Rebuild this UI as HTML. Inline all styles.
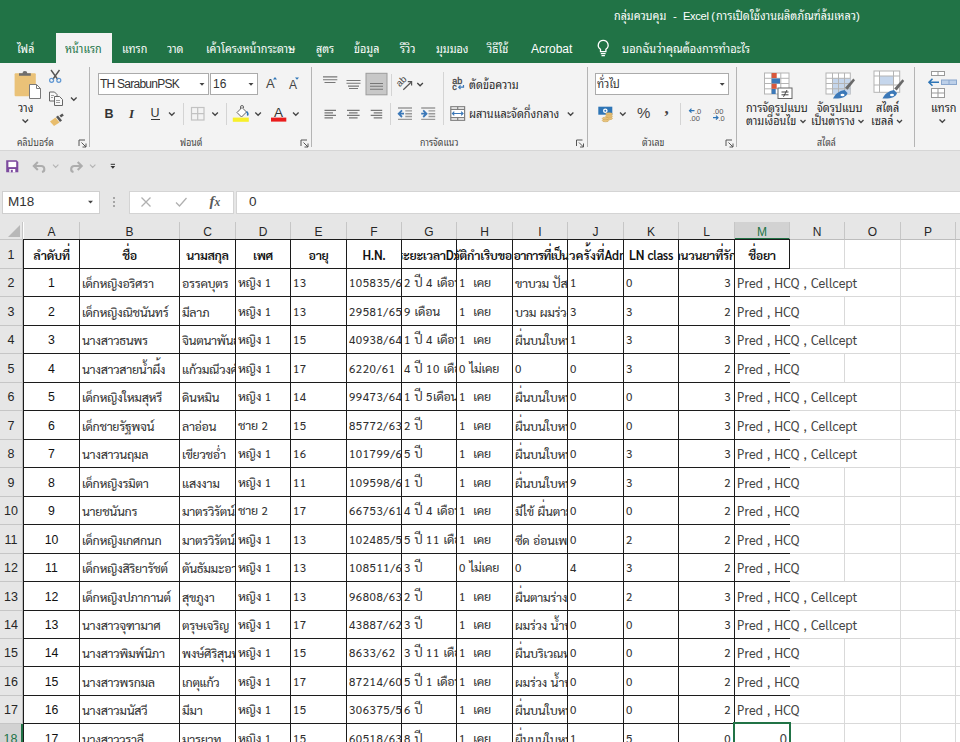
<!DOCTYPE html>
<html lang="th"><head><meta charset="utf-8"><title>Excel</title>
<style>
html,body{margin:0;padding:0}
body{width:960px;height:742px;overflow:hidden;position:relative;background:#e6e6e6;font-family:"Liberation Sans","Noto Sans Thai Looped","Loma",sans-serif;font-size:12px;color:#262626}
.abs,#top div,#top span,#top svg{position:absolute}
#top{position:absolute;left:0;top:0;width:960px;height:222px;overflow:hidden}
.t{white-space:nowrap;line-height:16px;height:16px}
.th{transform:scaleX(.85);transform-origin:0 50%}
#titlebar{left:0;top:0;width:960px;height:63px;background:#217346}
#ribbon{left:0;top:63px;width:960px;height:87px;background:#f3f3f3;border-bottom:1px solid #d6d6d6}
.tab{color:#fff;font-size:12.7px;top:40.5px}
.sep{width:1px;background:#b4b4b4;top:67px;height:80px}
.ssep{width:1px;background:#d4d4d4;height:22px}
.box{background:#fff;border:1px solid #ababab;box-sizing:border-box;height:22px;top:73px}
.glabel{font-size:10.3px;color:#444;top:135px}
.lbl{font-size:12.8px;color:#262626}
/* grid */
#grid{position:absolute;left:0;top:0;width:960px;height:742px;overflow:hidden}
#grid>div{position:absolute;box-sizing:border-box}
#gridbg{position:absolute;left:0;top:222px;width:960px;height:520px;background:#fff}
.corner{left:0;top:222px;width:23px;height:18px;background:#e6e6e6;border-right:1px solid #c6c6c6;border-bottom:1px solid #c6c6c6}
.corner:after{content:"";position:absolute;right:2px;bottom:2px;border-style:solid;border-width:0 0 12px 12px;border-color:transparent transparent #b8b8b8 transparent}
.ch{top:222px;height:18px;background:#e6e6e6;border-right:1px solid #c6c6c6;border-bottom:1px solid #bdbdbd;text-align:center;font-size:12px;line-height:21px;color:#262626}
.ch.sel{background:#d2d2d2;color:#217346;border-bottom:2px solid #217346}
.rh{left:0;width:23px;background:#e6e6e6;border-right:1px solid #bdbdbd;border-bottom:1px solid #c6c6c6;text-align:center;font-size:12.5px;color:#262626}
.rh.sel{background:#d2d2d2;color:#217346;border-right:2px solid #217346}
.gv{width:1px;background:#d9d9d9}
.gh{width:175px;height:1px;background:#d9d9d9}
.c{font-family:"Sarabun","Liberation Sans","Loma",sans-serif;font-size:12.5px;color:#303030;overflow:hidden;white-space:pre;letter-spacing:-0.35px;word-spacing:1px}
.c span{position:absolute;left:2px;bottom:5px;line-height:16px}
.c i{position:absolute;right:100%;font-style:normal}
.c var{font-style:normal;font-size:11.5px;letter-spacing:.55px}
.c.b{border:1px solid #1c1c1c;background:#fff}
.c.h{font-weight:600;color:#111}
.c.h span,.c.ctr span{left:50%;transform:translateX(-50%)}
.c.clip span{transform:none}
.c.ctr{font-family:"Liberation Sans","Sarabun",sans-serif;font-size:12.3px;letter-spacing:0;color:#111}
.c.rt span{left:auto;right:3px}
.c.m{overflow:visible;border:1px solid #1c1c1c;border-right:0;background:#fff;color:#444;font-size:13px;letter-spacing:0;word-spacing:1px}
.c.m span{left:2px}
.c.m.rt span{left:auto;right:3px}
.selbox{border:2px solid #217346}
</style></head><body>
<div id="gridbg"></div>
<div id="grid">
<div class="corner"></div>
<div class="ch" style="left:24px;width:56px">A</div>
<div class="ch" style="left:80px;width:100px">B</div>
<div class="ch" style="left:180px;width:56px">C</div>
<div class="ch" style="left:236px;width:55px">D</div>
<div class="ch" style="left:291px;width:56px">E</div>
<div class="ch" style="left:347px;width:55px">F</div>
<div class="ch" style="left:402px;width:55px">G</div>
<div class="ch" style="left:457px;width:56px">H</div>
<div class="ch" style="left:513px;width:55px">I</div>
<div class="ch" style="left:568px;width:56px">J</div>
<div class="ch" style="left:624px;width:55px">K</div>
<div class="ch" style="left:679px;width:56px">L</div>
<div class="ch sel" style="left:735px;width:55px">M</div>
<div class="ch" style="left:790px;width:55px">N</div>
<div class="ch" style="left:845px;width:56px">O</div>
<div class="ch" style="left:901px;width:55px">P</div>
<div class="ch" style="left:956px;width:56px">Q</div>
<div class="rh" style="top:240px;height:29px;line-height:30px">1</div>
<div class="rh" style="top:269px;height:28px;line-height:29px">2</div>
<div class="rh" style="top:297px;height:29px;line-height:30px">3</div>
<div class="rh" style="top:326px;height:28px;line-height:29px">4</div>
<div class="rh" style="top:354px;height:29px;line-height:30px">5</div>
<div class="rh" style="top:383px;height:28px;line-height:29px">6</div>
<div class="rh" style="top:411px;height:29px;line-height:30px">7</div>
<div class="rh" style="top:440px;height:28px;line-height:29px">8</div>
<div class="rh" style="top:468px;height:29px;line-height:30px">9</div>
<div class="rh" style="top:497px;height:28px;line-height:29px">10</div>
<div class="rh" style="top:525px;height:29px;line-height:30px">11</div>
<div class="rh" style="top:554px;height:28px;line-height:29px">12</div>
<div class="rh" style="top:582px;height:29px;line-height:30px">13</div>
<div class="rh" style="top:611px;height:28px;line-height:29px">14</div>
<div class="rh" style="top:639px;height:28px;line-height:29px">15</div>
<div class="rh" style="top:667px;height:29px;line-height:30px">16</div>
<div class="rh" style="top:696px;height:28px;line-height:29px">17</div>
<div class="rh sel" style="top:724px;height:29px;line-height:30px">18</div>
<div class="gv" style="left:844px;top:240px;height:29px"></div>
<div class="gv" style="left:844px;top:297px;height:29px"></div>
<div class="gv" style="left:844px;top:354px;height:29px"></div>
<div class="gv" style="left:844px;top:468px;height:29px"></div>
<div class="gv" style="left:844px;top:497px;height:28px"></div>
<div class="gv" style="left:844px;top:525px;height:29px"></div>
<div class="gv" style="left:844px;top:554px;height:28px"></div>
<div class="gv" style="left:844px;top:639px;height:28px"></div>
<div class="gv" style="left:844px;top:667px;height:29px"></div>
<div class="gv" style="left:844px;top:696px;height:28px"></div>
<div class="gv" style="left:844px;top:724px;height:18px"></div>
<div class="gv" style="left:789px;top:753px;height:-11px"></div>
<div class="gv" style="left:900px;top:240px;height:502px"></div>
<div class="gv" style="left:955px;top:240px;height:502px"></div>
<div class="gh" style="top:268px;left:790px"></div>
<div class="gh" style="top:296px;left:790px"></div>
<div class="gh" style="top:325px;left:790px"></div>
<div class="gh" style="top:353px;left:790px"></div>
<div class="gh" style="top:382px;left:790px"></div>
<div class="gh" style="top:410px;left:790px"></div>
<div class="gh" style="top:439px;left:790px"></div>
<div class="gh" style="top:467px;left:790px"></div>
<div class="gh" style="top:496px;left:790px"></div>
<div class="gh" style="top:524px;left:790px"></div>
<div class="gh" style="top:553px;left:790px"></div>
<div class="gh" style="top:581px;left:790px"></div>
<div class="gh" style="top:610px;left:790px"></div>
<div class="gh" style="top:638px;left:790px"></div>
<div class="gh" style="top:666px;left:790px"></div>
<div class="gh" style="top:695px;left:790px"></div>
<div class="gh" style="top:723px;left:790px"></div>
<div class="gh" style="top:752px;left:790px"></div>
<div class="c h b" style="left:23px;top:239px;width:57px;height:30px"><span>ลำดับที่</span></div>
<div class="c h b" style="left:79px;top:239px;width:101px;height:30px"><span>ชื่อ</span></div>
<div class="c h b" style="left:179px;top:239px;width:57px;height:30px"><span>นามสกุล</span></div>
<div class="c h b" style="left:235px;top:239px;width:56px;height:30px"><span>เพศ</span></div>
<div class="c h b" style="left:290px;top:239px;width:57px;height:30px"><span>อายุ</span></div>
<div class="c h b" style="left:346px;top:239px;width:56px;height:30px"><span>H.N.</span></div>
<div class="c h b clip" style="left:401px;top:239px;width:56px;height:30px"><span style="left:1px"><i>ร</i>ะยะเวลาDx SLE</span></div>
<div class="c h b clip" style="left:456px;top:239px;width:57px;height:30px"><span style="left:2.5px"><i>ประวั</i>ติกำเริบของโรค</span></div>
<div class="c h b clip" style="left:512px;top:239px;width:56px;height:30px"><span style="left:0.5px;letter-spacing:-0.8px">อาการที่เป็น</span></div>
<div class="c h b clip" style="left:567px;top:239px;width:57px;height:30px"><span style="left:1px;letter-spacing:.15px"><i>จำน</i>วครั้งที่Admit</span></div>
<div class="c h b" style="left:623px;top:239px;width:56px;height:30px"><span>LN class</span></div>
<div class="c h b clip" style="left:678px;top:239px;width:57px;height:30px"><span style="left:1.5px"><i>จำ</i>นวนยาที่รักษา</span></div>
<div class="c h b" style="left:734px;top:239px;width:56px;height:30px"><span>ชื่อยา</span></div>
<div class="c ctr b" style="left:23px;top:268px;width:57px;height:29px"><span>1</span></div>
<div class="c b" style="left:79px;top:268px;width:101px;height:29px"><span>เด็กหญิงอริศรา</span></div>
<div class="c b" style="left:179px;top:268px;width:57px;height:29px"><span>อรรคบุตร</span></div>
<div class="c b" style="left:235px;top:268px;width:56px;height:29px"><span>หญิง <var>1</var></span></div>
<div class="c b" style="left:290px;top:268px;width:57px;height:29px"><span><var>13</var></span></div>
<div class="c b" style="left:346px;top:268px;width:56px;height:29px"><span><var>105835/6</var></span></div>
<div class="c b" style="left:401px;top:268px;width:56px;height:29px"><span><var>2</var> ปี <var>4</var> เดือน</span></div>
<div class="c b" style="left:456px;top:268px;width:57px;height:29px"><span><var>1</var>  เคย</span></div>
<div class="c b" style="left:512px;top:268px;width:56px;height:29px"><span>ขาบวม ปัสส</span></div>
<div class="c b" style="left:567px;top:268px;width:57px;height:29px"><span><var>1</var></span></div>
<div class="c b" style="left:623px;top:268px;width:56px;height:29px"><span><var>0</var></span></div>
<div class="c rt b" style="left:678px;top:268px;width:57px;height:29px"><span><var>3</var></span></div>
<div class="c m" style="left:734px;top:268px;width:56px;height:29px"><span>Pred , HCQ , Cellcept</span></div>
<div class="c ctr b" style="left:23px;top:296px;width:57px;height:30px"><span>2</span></div>
<div class="c b" style="left:79px;top:296px;width:101px;height:30px"><span>เด็กหญิงณิชนันทร์</span></div>
<div class="c b" style="left:179px;top:296px;width:57px;height:30px"><span>มีลาภ</span></div>
<div class="c b" style="left:235px;top:296px;width:56px;height:30px"><span>หญิง <var>1</var></span></div>
<div class="c b" style="left:290px;top:296px;width:57px;height:30px"><span><var>13</var></span></div>
<div class="c b" style="left:346px;top:296px;width:56px;height:30px"><span><var>29581/65</var></span></div>
<div class="c b" style="left:401px;top:296px;width:56px;height:30px"><span><var>9</var> เดือน</span></div>
<div class="c b" style="left:456px;top:296px;width:57px;height:30px"><span><var>1</var>  เคย</span></div>
<div class="c b" style="left:512px;top:296px;width:56px;height:30px"><span>บวม ผมร่วง</span></div>
<div class="c b" style="left:567px;top:296px;width:57px;height:30px"><span><var>3</var></span></div>
<div class="c b" style="left:623px;top:296px;width:56px;height:30px"><span><var>3</var></span></div>
<div class="c rt b" style="left:678px;top:296px;width:57px;height:30px"><span><var>2</var></span></div>
<div class="c m" style="left:734px;top:296px;width:56px;height:30px"><span>Pred , HCQ</span></div>
<div class="c ctr b" style="left:23px;top:325px;width:57px;height:29px"><span>3</span></div>
<div class="c b" style="left:79px;top:325px;width:101px;height:29px"><span>นางสาวธนพร</span></div>
<div class="c b" style="left:179px;top:325px;width:57px;height:29px"><span>จินตนาพันธ์</span></div>
<div class="c b" style="left:235px;top:325px;width:56px;height:29px"><span>หญิง <var>1</var></span></div>
<div class="c b" style="left:290px;top:325px;width:57px;height:29px"><span><var>15</var></span></div>
<div class="c b" style="left:346px;top:325px;width:56px;height:29px"><span><var>40938/64</var></span></div>
<div class="c b" style="left:401px;top:325px;width:56px;height:29px"><span><var>1</var> ปี <var>4</var> เดือน</span></div>
<div class="c b" style="left:456px;top:325px;width:57px;height:29px"><span><var>1</var>  เคย</span></div>
<div class="c b" style="left:512px;top:325px;width:56px;height:29px"><span>ผื่นบนใบหน้า</span></div>
<div class="c b" style="left:567px;top:325px;width:57px;height:29px"><span><var>1</var></span></div>
<div class="c b" style="left:623px;top:325px;width:56px;height:29px"><span><var>3</var></span></div>
<div class="c rt b" style="left:678px;top:325px;width:57px;height:29px"><span><var>3</var></span></div>
<div class="c m" style="left:734px;top:325px;width:56px;height:29px"><span>Pred , HCQ , Cellcept</span></div>
<div class="c ctr b" style="left:23px;top:353px;width:57px;height:30px"><span>4</span></div>
<div class="c b" style="left:79px;top:353px;width:101px;height:30px"><span>นางสาวสายน้ำผึ้ง</span></div>
<div class="c b" style="left:179px;top:353px;width:57px;height:30px"><span>แก้วมณีวงศ์</span></div>
<div class="c b" style="left:235px;top:353px;width:56px;height:30px"><span>หญิง <var>1</var></span></div>
<div class="c b" style="left:290px;top:353px;width:57px;height:30px"><span><var>17</var></span></div>
<div class="c b" style="left:346px;top:353px;width:56px;height:30px"><span><var>6220/61</var></span></div>
<div class="c b" style="left:401px;top:353px;width:56px;height:30px"><span><var>4</var> ปี <var>10</var> เดือน</span></div>
<div class="c b" style="left:456px;top:353px;width:57px;height:30px"><span><var>0</var> ไม่เคย</span></div>
<div class="c b" style="left:512px;top:353px;width:56px;height:30px"><span><var>0</var></span></div>
<div class="c b" style="left:567px;top:353px;width:57px;height:30px"><span><var>0</var></span></div>
<div class="c b" style="left:623px;top:353px;width:56px;height:30px"><span><var>3</var></span></div>
<div class="c rt b" style="left:678px;top:353px;width:57px;height:30px"><span><var>2</var></span></div>
<div class="c m" style="left:734px;top:353px;width:56px;height:30px"><span>Pred , HCQ</span></div>
<div class="c ctr b" style="left:23px;top:382px;width:57px;height:29px"><span>5</span></div>
<div class="c b" style="left:79px;top:382px;width:101px;height:29px"><span>เด็กหญิงใหมสุหรี</span></div>
<div class="c b" style="left:179px;top:382px;width:57px;height:29px"><span>ดินหมิน</span></div>
<div class="c b" style="left:235px;top:382px;width:56px;height:29px"><span>หญิง <var>1</var></span></div>
<div class="c b" style="left:290px;top:382px;width:57px;height:29px"><span><var>14</var></span></div>
<div class="c b" style="left:346px;top:382px;width:56px;height:29px"><span><var>99473/64</var></span></div>
<div class="c b" style="left:401px;top:382px;width:56px;height:29px"><span><var>1</var> ปี <var>5</var>เดือน</span></div>
<div class="c b" style="left:456px;top:382px;width:57px;height:29px"><span><var>1</var>  เคย</span></div>
<div class="c b" style="left:512px;top:382px;width:56px;height:29px"><span>ผื่นบนใบหน้า</span></div>
<div class="c b" style="left:567px;top:382px;width:57px;height:29px"><span><var>0</var></span></div>
<div class="c b" style="left:623px;top:382px;width:56px;height:29px"><span><var>0</var></span></div>
<div class="c rt b" style="left:678px;top:382px;width:57px;height:29px"><span><var>3</var></span></div>
<div class="c m" style="left:734px;top:382px;width:56px;height:29px"><span>Pred , HCQ , Cellcept</span></div>
<div class="c ctr b" style="left:23px;top:410px;width:57px;height:30px"><span>6</span></div>
<div class="c b" style="left:79px;top:410px;width:101px;height:30px"><span>เด็กชายรัฐพจน์</span></div>
<div class="c b" style="left:179px;top:410px;width:57px;height:30px"><span>ลาอ่อน</span></div>
<div class="c b" style="left:235px;top:410px;width:56px;height:30px"><span>ชาย <var>2</var></span></div>
<div class="c b" style="left:290px;top:410px;width:57px;height:30px"><span><var>15</var></span></div>
<div class="c b" style="left:346px;top:410px;width:56px;height:30px"><span><var>85772/63</var></span></div>
<div class="c b" style="left:401px;top:410px;width:56px;height:30px"><span><var>2</var> ปี</span></div>
<div class="c b" style="left:456px;top:410px;width:57px;height:30px"><span><var>1</var>  เคย</span></div>
<div class="c b" style="left:512px;top:410px;width:56px;height:30px"><span>ผื่นบนใบหน้า</span></div>
<div class="c b" style="left:567px;top:410px;width:57px;height:30px"><span><var>0</var></span></div>
<div class="c b" style="left:623px;top:410px;width:56px;height:30px"><span><var>0</var></span></div>
<div class="c rt b" style="left:678px;top:410px;width:57px;height:30px"><span><var>3</var></span></div>
<div class="c m" style="left:734px;top:410px;width:56px;height:30px"><span>Pred , HCQ , Cellcept</span></div>
<div class="c ctr b" style="left:23px;top:439px;width:57px;height:29px"><span>7</span></div>
<div class="c b" style="left:79px;top:439px;width:101px;height:29px"><span>นางสาวนฤมล</span></div>
<div class="c b" style="left:179px;top:439px;width:57px;height:29px"><span>เขียวชอ่ำ</span></div>
<div class="c b" style="left:235px;top:439px;width:56px;height:29px"><span>หญิง <var>1</var></span></div>
<div class="c b" style="left:290px;top:439px;width:57px;height:29px"><span><var>16</var></span></div>
<div class="c b" style="left:346px;top:439px;width:56px;height:29px"><span><var>101799/6</var></span></div>
<div class="c b" style="left:401px;top:439px;width:56px;height:29px"><span><var>5</var> ปี</span></div>
<div class="c b" style="left:456px;top:439px;width:57px;height:29px"><span><var>1</var>  เคย</span></div>
<div class="c b" style="left:512px;top:439px;width:56px;height:29px"><span>ผื่นบนใบหน้า</span></div>
<div class="c b" style="left:567px;top:439px;width:57px;height:29px"><span><var>0</var></span></div>
<div class="c b" style="left:623px;top:439px;width:56px;height:29px"><span><var>3</var></span></div>
<div class="c rt b" style="left:678px;top:439px;width:57px;height:29px"><span><var>3</var></span></div>
<div class="c m" style="left:734px;top:439px;width:56px;height:29px"><span>Pred , HCQ , Cellcept</span></div>
<div class="c ctr b" style="left:23px;top:467px;width:57px;height:30px"><span>8</span></div>
<div class="c b" style="left:79px;top:467px;width:101px;height:30px"><span>เด็กหญิงรมิตา</span></div>
<div class="c b" style="left:179px;top:467px;width:57px;height:30px"><span>แสงงาม</span></div>
<div class="c b" style="left:235px;top:467px;width:56px;height:30px"><span>หญิง <var>1</var></span></div>
<div class="c b" style="left:290px;top:467px;width:57px;height:30px"><span><var>11</var></span></div>
<div class="c b" style="left:346px;top:467px;width:56px;height:30px"><span><var>109598/6</var></span></div>
<div class="c b" style="left:401px;top:467px;width:56px;height:30px"><span><var>1</var> ปี</span></div>
<div class="c b" style="left:456px;top:467px;width:57px;height:30px"><span><var>1</var>  เคย</span></div>
<div class="c b" style="left:512px;top:467px;width:56px;height:30px"><span>ผื่นบนใบหน้า</span></div>
<div class="c b" style="left:567px;top:467px;width:57px;height:30px"><span><var>9</var></span></div>
<div class="c b" style="left:623px;top:467px;width:56px;height:30px"><span><var>3</var></span></div>
<div class="c rt b" style="left:678px;top:467px;width:57px;height:30px"><span><var>2</var></span></div>
<div class="c m" style="left:734px;top:467px;width:56px;height:30px"><span>Pred , HCQ</span></div>
<div class="c ctr b" style="left:23px;top:496px;width:57px;height:29px"><span>9</span></div>
<div class="c b" style="left:79px;top:496px;width:101px;height:29px"><span>นายชนันกร</span></div>
<div class="c b" style="left:179px;top:496px;width:57px;height:29px"><span>มาตรวิรัตน์</span></div>
<div class="c b" style="left:235px;top:496px;width:56px;height:29px"><span>ชาย <var>2</var></span></div>
<div class="c b" style="left:290px;top:496px;width:57px;height:29px"><span><var>17</var></span></div>
<div class="c b" style="left:346px;top:496px;width:56px;height:29px"><span><var>66753/61</var></span></div>
<div class="c b" style="left:401px;top:496px;width:56px;height:29px"><span><var>4</var> ปี <var>4</var> เดือน</span></div>
<div class="c b" style="left:456px;top:496px;width:57px;height:29px"><span><var>1</var>  เคย</span></div>
<div class="c b" style="left:512px;top:496px;width:56px;height:29px"><span>มีไข้ ผื่นตาม</span></div>
<div class="c b" style="left:567px;top:496px;width:57px;height:29px"><span><var>0</var></span></div>
<div class="c b" style="left:623px;top:496px;width:56px;height:29px"><span><var>0</var></span></div>
<div class="c rt b" style="left:678px;top:496px;width:57px;height:29px"><span><var>2</var></span></div>
<div class="c m" style="left:734px;top:496px;width:56px;height:29px"><span>Pred , HCQ</span></div>
<div class="c ctr b" style="left:23px;top:524px;width:57px;height:30px"><span>10</span></div>
<div class="c b" style="left:79px;top:524px;width:101px;height:30px"><span>เด็กหญิงเกศกนก</span></div>
<div class="c b" style="left:179px;top:524px;width:57px;height:30px"><span>มาตรวิรัตน์</span></div>
<div class="c b" style="left:235px;top:524px;width:56px;height:30px"><span>หญิง <var>1</var></span></div>
<div class="c b" style="left:290px;top:524px;width:57px;height:30px"><span><var>13</var></span></div>
<div class="c b" style="left:346px;top:524px;width:56px;height:30px"><span><var>102485/5</var></span></div>
<div class="c b" style="left:401px;top:524px;width:56px;height:30px"><span><var>5</var> ปี <var>11</var> เดือน</span></div>
<div class="c b" style="left:456px;top:524px;width:57px;height:30px"><span><var>1</var>  เคย</span></div>
<div class="c b" style="left:512px;top:524px;width:56px;height:30px"><span>ซีด อ่อนเพลีย</span></div>
<div class="c b" style="left:567px;top:524px;width:57px;height:30px"><span><var>0</var></span></div>
<div class="c b" style="left:623px;top:524px;width:56px;height:30px"><span><var>2</var></span></div>
<div class="c rt b" style="left:678px;top:524px;width:57px;height:30px"><span><var>2</var></span></div>
<div class="c m" style="left:734px;top:524px;width:56px;height:30px"><span>Pred , HCQ</span></div>
<div class="c ctr b" style="left:23px;top:553px;width:57px;height:29px"><span>11</span></div>
<div class="c b" style="left:79px;top:553px;width:101px;height:29px"><span>เด็กหญิงสิริยารัชต์</span></div>
<div class="c b" style="left:179px;top:553px;width:57px;height:29px"><span>ตันธัมมะอาจ</span></div>
<div class="c b" style="left:235px;top:553px;width:56px;height:29px"><span>หญิง <var>1</var></span></div>
<div class="c b" style="left:290px;top:553px;width:57px;height:29px"><span><var>13</var></span></div>
<div class="c b" style="left:346px;top:553px;width:56px;height:29px"><span><var>108511/6</var></span></div>
<div class="c b" style="left:401px;top:553px;width:56px;height:29px"><span><var>3</var> ปี</span></div>
<div class="c b" style="left:456px;top:553px;width:57px;height:29px"><span><var>0</var> ไม่เคย</span></div>
<div class="c b" style="left:512px;top:553px;width:56px;height:29px"><span><var>0</var></span></div>
<div class="c b" style="left:567px;top:553px;width:57px;height:29px"><span><var>4</var></span></div>
<div class="c b" style="left:623px;top:553px;width:56px;height:29px"><span><var>3</var></span></div>
<div class="c rt b" style="left:678px;top:553px;width:57px;height:29px"><span><var>2</var></span></div>
<div class="c m" style="left:734px;top:553px;width:56px;height:29px"><span>Pred , HCQ</span></div>
<div class="c ctr b" style="left:23px;top:581px;width:57px;height:30px"><span>12</span></div>
<div class="c b" style="left:79px;top:581px;width:101px;height:30px"><span>เด็กหญิงปภากานต์</span></div>
<div class="c b" style="left:179px;top:581px;width:57px;height:30px"><span>สุขภูงา</span></div>
<div class="c b" style="left:235px;top:581px;width:56px;height:30px"><span>หญิง <var>1</var></span></div>
<div class="c b" style="left:290px;top:581px;width:57px;height:30px"><span><var>13</var></span></div>
<div class="c b" style="left:346px;top:581px;width:56px;height:30px"><span><var>96808/63</var></span></div>
<div class="c b" style="left:401px;top:581px;width:56px;height:30px"><span><var>2</var> ปี</span></div>
<div class="c b" style="left:456px;top:581px;width:57px;height:30px"><span><var>1</var>  เคย</span></div>
<div class="c b" style="left:512px;top:581px;width:56px;height:30px"><span>ผื่นตามร่างกาย</span></div>
<div class="c b" style="left:567px;top:581px;width:57px;height:30px"><span><var>0</var></span></div>
<div class="c b" style="left:623px;top:581px;width:56px;height:30px"><span><var>2</var></span></div>
<div class="c rt b" style="left:678px;top:581px;width:57px;height:30px"><span><var>3</var></span></div>
<div class="c m" style="left:734px;top:581px;width:56px;height:30px"><span>Pred , HCQ , Cellcept</span></div>
<div class="c ctr b" style="left:23px;top:610px;width:57px;height:29px"><span>13</span></div>
<div class="c b" style="left:79px;top:610px;width:101px;height:29px"><span>นางสาวจุฑามาศ</span></div>
<div class="c b" style="left:179px;top:610px;width:57px;height:29px"><span>ตรุษเจริญ</span></div>
<div class="c b" style="left:235px;top:610px;width:56px;height:29px"><span>หญิง <var>1</var></span></div>
<div class="c b" style="left:290px;top:610px;width:57px;height:29px"><span><var>17</var></span></div>
<div class="c b" style="left:346px;top:610px;width:56px;height:29px"><span><var>43887/62</var></span></div>
<div class="c b" style="left:401px;top:610px;width:56px;height:29px"><span><var>3</var> ปี</span></div>
<div class="c b" style="left:456px;top:610px;width:57px;height:29px"><span><var>1</var>  เคย</span></div>
<div class="c b" style="left:512px;top:610px;width:56px;height:29px"><span>ผมร่วง น้ำหนัก</span></div>
<div class="c b" style="left:567px;top:610px;width:57px;height:29px"><span><var>0</var></span></div>
<div class="c b" style="left:623px;top:610px;width:56px;height:29px"><span><var>0</var></span></div>
<div class="c rt b" style="left:678px;top:610px;width:57px;height:29px"><span><var>3</var></span></div>
<div class="c m" style="left:734px;top:610px;width:56px;height:29px"><span>Pred , HCQ , Cellcept</span></div>
<div class="c ctr b" style="left:23px;top:638px;width:57px;height:29px"><span>14</span></div>
<div class="c b" style="left:79px;top:638px;width:101px;height:29px"><span>นางสาวพิมพ์นิภา</span></div>
<div class="c b" style="left:179px;top:638px;width:57px;height:29px"><span>พงษ์ศิริสุนทร</span></div>
<div class="c b" style="left:235px;top:638px;width:56px;height:29px"><span>หญิง <var>1</var></span></div>
<div class="c b" style="left:290px;top:638px;width:57px;height:29px"><span><var>15</var></span></div>
<div class="c b" style="left:346px;top:638px;width:56px;height:29px"><span><var>8633/62</var></span></div>
<div class="c b" style="left:401px;top:638px;width:56px;height:29px"><span><var>3</var> ปี <var>11</var> เดือน</span></div>
<div class="c b" style="left:456px;top:638px;width:57px;height:29px"><span><var>1</var>  เคย</span></div>
<div class="c b" style="left:512px;top:638px;width:56px;height:29px"><span>ผื่นบริเวณหน้า</span></div>
<div class="c b" style="left:567px;top:638px;width:57px;height:29px"><span><var>0</var></span></div>
<div class="c b" style="left:623px;top:638px;width:56px;height:29px"><span><var>0</var></span></div>
<div class="c rt b" style="left:678px;top:638px;width:57px;height:29px"><span><var>2</var></span></div>
<div class="c m" style="left:734px;top:638px;width:56px;height:29px"><span>Pred , HCQ</span></div>
<div class="c ctr b" style="left:23px;top:666px;width:57px;height:30px"><span>15</span></div>
<div class="c b" style="left:79px;top:666px;width:101px;height:30px"><span>นางสาวพรกมล</span></div>
<div class="c b" style="left:179px;top:666px;width:57px;height:30px"><span>เกตุแก้ว</span></div>
<div class="c b" style="left:235px;top:666px;width:56px;height:30px"><span>หญิง <var>1</var></span></div>
<div class="c b" style="left:290px;top:666px;width:57px;height:30px"><span><var>17</var></span></div>
<div class="c b" style="left:346px;top:666px;width:56px;height:30px"><span><var>87214/60</var></span></div>
<div class="c b" style="left:401px;top:666px;width:56px;height:30px"><span><var>5</var> ปี <var>1</var> เดือน</span></div>
<div class="c b" style="left:456px;top:666px;width:57px;height:30px"><span><var>1</var>  เคย</span></div>
<div class="c b" style="left:512px;top:666px;width:56px;height:30px"><span>ผมร่วง น้ำหนัก</span></div>
<div class="c b" style="left:567px;top:666px;width:57px;height:30px"><span><var>0</var></span></div>
<div class="c b" style="left:623px;top:666px;width:56px;height:30px"><span><var>0</var></span></div>
<div class="c rt b" style="left:678px;top:666px;width:57px;height:30px"><span><var>2</var></span></div>
<div class="c m" style="left:734px;top:666px;width:56px;height:30px"><span>Pred , HCQ</span></div>
<div class="c ctr b" style="left:23px;top:695px;width:57px;height:29px"><span>16</span></div>
<div class="c b" style="left:79px;top:695px;width:101px;height:29px"><span>นางสาวมนัสวี</span></div>
<div class="c b" style="left:179px;top:695px;width:57px;height:29px"><span>มีมา</span></div>
<div class="c b" style="left:235px;top:695px;width:56px;height:29px"><span>หญิง <var>1</var></span></div>
<div class="c b" style="left:290px;top:695px;width:57px;height:29px"><span><var>15</var></span></div>
<div class="c b" style="left:346px;top:695px;width:56px;height:29px"><span><var>306375/5</var></span></div>
<div class="c b" style="left:401px;top:695px;width:56px;height:29px"><span><var>6</var> ปี</span></div>
<div class="c b" style="left:456px;top:695px;width:57px;height:29px"><span><var>1</var>  เคย</span></div>
<div class="c b" style="left:512px;top:695px;width:56px;height:29px"><span>ผื่นบนใบหน้า</span></div>
<div class="c b" style="left:567px;top:695px;width:57px;height:29px"><span><var>0</var></span></div>
<div class="c b" style="left:623px;top:695px;width:56px;height:29px"><span><var>0</var></span></div>
<div class="c rt b" style="left:678px;top:695px;width:57px;height:29px"><span><var>2</var></span></div>
<div class="c m" style="left:734px;top:695px;width:56px;height:29px"><span>Pred , HCQ</span></div>
<div class="c ctr b" style="left:23px;top:723px;width:57px;height:30px"><span>17</span></div>
<div class="c b" style="left:79px;top:723px;width:101px;height:30px"><span>นางสาววราลี</span></div>
<div class="c b" style="left:179px;top:723px;width:57px;height:30px"><span>มารยาท</span></div>
<div class="c b" style="left:235px;top:723px;width:56px;height:30px"><span>หญิง <var>1</var></span></div>
<div class="c b" style="left:290px;top:723px;width:57px;height:30px"><span><var>15</var></span></div>
<div class="c b" style="left:346px;top:723px;width:56px;height:30px"><span><var>60518/63</var></span></div>
<div class="c b" style="left:401px;top:723px;width:56px;height:30px"><span><var>8</var> ปี</span></div>
<div class="c b" style="left:456px;top:723px;width:57px;height:30px"><span><var>1</var>  เคย</span></div>
<div class="c b" style="left:512px;top:723px;width:56px;height:30px"><span>ผื่นบนใบหน้า</span></div>
<div class="c b" style="left:567px;top:723px;width:57px;height:30px"><span><var>1</var></span></div>
<div class="c b" style="left:623px;top:723px;width:56px;height:30px"><span><var>5</var></span></div>
<div class="c rt b" style="left:678px;top:723px;width:57px;height:30px"><span><var>0</var></span></div>
<div class="c m rt" style="left:734px;top:723px;width:56px;height:30px"><span>0</span></div>
<div class="selbox" style="left:733px;top:722px;width:58px;height:31px"></div>
</div><div id="top">
<div id="titlebar"></div>
<div class="t th" style="left:614px;top:8px;color:#fff;font-size:12.7px">กลุ่มควบคุม</div>
<div class="t" style="left:673px;top:8px;color:#fff;font-size:11.5px">-</div>
<div class="t" style="left:683px;top:8px;color:#fff;font-size:11.2px;letter-spacing:-0.35px">Excel (</div>
<div class="t th" style="left:716px;top:8px;color:#fff;font-size:12.7px;transform:scaleX(.86)">การเปิดใช้งานผลิตภัณฑ์ล้มเหลว</div>
<div class="t" style="left:856px;top:8px;color:#fff;font-size:11.5px">)</div>
<div id="ribbon"></div>
<div style="left:56px;top:33px;width:56px;height:31px;background:#f3f3f3"></div>
<div class="t tab th" style="left:17px">ไฟล์</div>
<div class="t tab th" style="left:65px;color:#217346">หน้าแรก</div>
<div class="t tab th" style="left:122px">แทรก</div>
<div class="t tab th" style="left:167px">วาด</div>
<div class="t tab th" style="left:206px">เค้าโครงหน้ากระดาษ</div>
<div class="t tab th" style="left:316px">สูตร</div>
<div class="t tab th" style="left:354px">ข้อมูล</div>
<div class="t tab th" style="left:400px">รีวิว</div>
<div class="t tab th" style="left:436px">มุมมอง</div>
<div class="t tab th" style="left:487px">วิธีใช้</div>
<div class="t tab" style="left:531px;font-size:12px">Acrobat</div>
<div class="t tab th" style="left:622px;transform:scaleX(.87)">บอกฉันว่าคุณต้องการทำอะไร</div>

<!-- group separators -->
<div class="sep" style="left:89px"></div>
<div class="sep" style="left:311px"></div>
<div class="sep" style="left:587px"></div>
<div class="sep" style="left:736px"></div>
<div class="sep" style="left:914px"></div>
<div class="ssep" style="left:183px;top:103px"></div>
<div class="ssep" style="left:226px;top:103px"></div>
<div class="ssep" style="left:391px;top:74px"></div>
<div class="ssep" style="left:390px;top:103px"></div>
<div class="ssep" style="left:443px;top:72px;height:53px"></div>
<div class="ssep" style="left:680px;top:103px"></div>

<!-- boxes -->
<div class="box" style="left:98px;width:111px"></div>
<div class="box" style="left:210px;width:48px"></div>
<div class="box" style="left:595px;width:134px"></div>
<div class="t" style="left:100px;top:76px;font-size:12px;letter-spacing:-0.75px;color:#333">TH SarabunPSK</div>
<div class="t" style="left:213px;top:76px;font-size:12px;color:#333">16</div>
<div class="t th" style="left:597px;top:76px;font-size:12.8px;color:#333">ทั่วไป</div>

<!-- labels -->
<div class="t th lbl" style="left:18px;top:100px">วาง</div>
<div class="t th glabel" style="left:17px">คลิปบอร์ด</div>
<div class="t th glabel" style="left:180px">ฟอนต์</div>
<div class="t th glabel" style="left:420px">การจัดแนว</div>
<div class="t th glabel" style="left:642px">ตัวเลข</div>
<div class="t th glabel" style="left:817px">สไตล์</div>
<div class="t th lbl" style="left:469px;top:77px">ตัดข้อความ</div>
<div class="t th lbl" style="left:469px;top:106px">ผสานและจัดกึ่งกลาง</div>
<div class="t th lbl" style="left:746px;top:100px">การจัดรูปแบบ</div>
<div class="t th lbl" style="left:746px;top:113px">ตามเงื่อนไข</div>
<div class="t th lbl" style="left:817px;top:100px">จัดรูปแบบ</div>
<div class="t th lbl" style="left:811px;top:113px">เป็นตาราง</div>
<div class="t th lbl" style="left:876px;top:100px">สไตล์</div>
<div class="t th lbl" style="left:871px;top:113px">เซลล์</div>
<div class="t th lbl" style="left:931px;top:100px">แทรก</div>
<div class="t" style="left:104.500px;top:106px;font-size:12.5px;font-weight:bold;color:#333">B</div>
<div class="t" style="left:129px;top:106px;font-size:13px;font-style:italic;font-family:'Liberation Serif',serif;font-weight:bold;color:#333">I</div>
<div class="t" style="left:150.500px;top:106px;font-size:12.5px;color:#333;border-bottom:1px solid #333;height:13px;line-height:14px">U</div>
<div class="t" style="left:266px;top:76px;font-size:13px;color:#444">A</div>
<div class="t" style="left:289px;top:77px;font-size:12px;color:#444">A</div>
<div class="t" style="left:274px;top:104.500px;font-size:13.5px;color:#333">A</div>
<div class="t" style="left:637px;top:105px;font-size:15px;color:#444">%</div>
<div class="t" style="left:664.500px;top:101px;font-size:17px;font-weight:bold;color:#444;font-family:'Liberation Serif',serif">,</div>

<!-- name box / formula bar -->
<div style="left:2px;top:190.500px;width:98px;height:23px;background:#fff;border:1px solid #cfcfcf;box-sizing:border-box"></div>
<div style="left:128.500px;top:190.500px;width:105px;height:23px;background:#fff;border:1px solid #d4d4d4;box-sizing:border-box"></div>
<div style="left:236px;top:190.500px;width:730px;height:23px;background:#fff;border:1px solid #d4d4d4;box-sizing:border-box"></div>
<div class="t" style="left:8px;top:194px;font-size:13.5px;color:#333">M18</div>
<div class="t" style="left:249px;top:194px;font-size:13.5px;color:#333">0</div>
<div class="t" style="left:208px;top:193px;font-size:14px;font-style:italic;font-family:'Liberation Serif',serif;color:#5a5a5a;font-weight:bold;left:209.500px;font-size:15px">f<span style="position:static;font-size:11.500px">x</span></div>

<svg width="960" height="222" viewBox="0 0 960 222" style="left:0;top:0" fill="none" stroke-linecap="butt">
<!-- lightbulb -->
<g stroke="#fff" stroke-width="1.300" transform="translate(0 1)"><path d="M603.200 39.300a4.900 4.900 0 0 1 2.700 9v2.400h-5.400v-2.400a4.900 4.900 0 0 1 2.700-9"/><path d="M600.800 52.700h4.800M601.500 54.700h3.400"/></g>
<!-- chevrons -->
<g stroke="#444" stroke-width="1.3" id="chev">
<path d="M22.500 119.500l2.800 2.800 2.800-2.800"/>
<path d="M71 97.500l2.800 2.800 2.800-2.800"/>
<path d="M169 112.500l2.800 2.800 2.800-2.800"/>
<path d="M212.300 112.500l2.800 2.800 2.800-2.800"/>
<path d="M255.300 112.500l2.800 2.800 2.800-2.800"/>
<path d="M293 112.500l2.800 2.800 2.800-2.800"/>
<path d="M417.300 83l2.800 2.800 2.800-2.800"/>
<path d="M567.800 112.500l2.800 2.800 2.800-2.800"/>
<path d="M620 112.500l2.800 2.800 2.800-2.800"/>
<path d="M939.500 119.500l2.800 2.800 2.800-2.800"/>
<path d="M800.500 120l2.500 2.500 2.500-2.500"/>
<path d="M858.500 120l2.500 2.500 2.500-2.500"/>
<path d="M897 120l2.500 2.500 2.500-2.500"/>
</g>
<!-- dropdown arrows -->
<g fill="#444"><path d="M199.500 83h5l-2.500 2.800z"/><path d="M248.500 83h5l-2.500 2.800z"/><path d="M719.700 83h5l-2.500 2.800z"/><path d="M88 200.800h5l-2.500 2.800z"/></g>
<!-- dialog launchers -->
<g stroke="#555" stroke-width="1">
<path d="M79 146v-6h6M81.500 142.500l4.500 4.500M86 143.500v3.500h-3.500"/>
<path d="M301 146v-6h6M303.500 142.500l4.500 4.500M308 143.500v3.500h-3.500"/>
<path d="M576.500 146v-6h6M579 142.500l4.500 4.500M583.500 143.500v3.500h-3.500"/>
<path d="M726 146v-6h6M728.500 142.500l4.500 4.500M733 143.500v3.500h-3.500"/>
</g>
<!-- paste -->
<rect x="14.600" y="73.300" width="21.200" height="23" rx="1" fill="#eac278"/>
<path d="M19 75.700v-2.400h3.500a2.400 2.400 0 0 1 4.800 0h3.500v2.400z" fill="#6e6e6e"/>
<path d="M29.500 84.500h7l4 4v10h-11z" fill="#fff" stroke="#7a7a7a" stroke-width="1"/>
<path d="M36.500 84.500v4h4" stroke="#7a7a7a" stroke-width="1"/>
<!-- scissors -->
<g stroke="#555" stroke-width="1.400"><path d="M51 70l6.800 9.500M59.500 70l-6.800 9.500"/></g>
<g stroke="#5f97d3" stroke-width="1.200"><circle cx="51.600" cy="80.300" r="2"/><circle cx="58.800" cy="80.300" r="2"/></g>
<!-- copy -->
<g stroke="#666" stroke-width="1" fill="#f8f8f8"><path d="M49.500 92h5l2.500 2.500v6.500h-7.500z"/><path d="M54.500 96.500h5l3 3v6h-8z"/></g>
<g stroke="#888" stroke-width=".8"><path d="M51 95.500h3M51 97.500h2M56 100.500h4M56 102.500h4"/></g>
<!-- format painter -->
<path d="M50 121.500l5.500-4 4 5-5.500 3.500z" fill="#e8bd6d"/><path d="M56 117l2-1.600 4 5-2 1.600z" fill="#555"/><path d="M59.500 115.500l2.800-2 1.500 2-2.800 2z" fill="#555"/>
<!-- grow/shrink font triangles -->
<path d="M273 79.500h4l-2-2.500z" fill="#2e75b6"/><path d="M295 77.500h4l-2 2.300z" fill="#2e75b6"/>
<!-- borders -->
<g stroke="#c2c2c2" stroke-width="1.200"><rect x="191.500" y="107.500" width="12.500" height="12.500"/><path d="M197.700 107.500v12.500M191.500 113.700h12.500"/></g>
<!-- fill color -->
<rect x="232.800" y="117.600" width="16" height="4.200" fill="#f7ef2a"/>
<path d="M237 112.500l5-5 4.500 4.500-5 5z" fill="#fff" stroke="#666" stroke-width="1"/><path d="M240.500 109v-2a1.500 1.500 0 0 1 3 0v1" stroke="#666" stroke-width="1"/><path d="M246.500 111.500c1.500 1.500 1.800 3 .8 4" stroke="#2e75b6" stroke-width="1.600"/>
<!-- font color bar -->
<rect x="271" y="117.600" width="15.300" height="4" fill="#ea1c1c"/>
<!-- align top/middle/bottom -->
<g stroke="#777" stroke-width="1.100">
<path d="M323 76.900h14.300M323 79.700h14.300M324.500 82.500h11"/>
<path d="M346.500 80.500h14M346.500 83.300h14M348 86.100h11M349 88.500h9" />
</g>
<rect x="366" y="73.300" width="21" height="21.500" fill="#c8c8c8" stroke="#9c9c9c" stroke-width="1"/>
<g stroke="#777" stroke-width="1.100"><path d="M370 83.500h13M370 86.300h13M370 89.300h13"/></g>
<!-- align left/center/right -->
<g stroke="#777" stroke-width="1.100">
<path d="M324.500 110.400h11.500M324.500 112.900h8.500M324.500 115.400h11.500M324.500 117.900h8.500"/>
<path d="M347 110.400h12.600M349 112.900h8.600M347 115.400h12.600M349 117.900h8.600"/>
<path d="M370.700 110.400h11.500M373.700 112.900h8.500M370.700 115.400h11.500M373.700 117.900h8.500"/>
</g>
<!-- orientation -->
<g stroke="#555" stroke-width="1.200"><path d="M403.300 89.700l8.300-8"/><path d="M407.800 81.700h3.800v3.800"/></g>
<text transform="translate(399.700 87.200) rotate(-45)" font-size="9.500" fill="#444" stroke="none" font-family="Liberation Sans, sans-serif">ab</text>
<!-- indent icons -->
<g stroke="#9a9a9a" stroke-width="1.400"><path d="M398 108h14M405.300 110.900h6.700M405.300 113.700h6.700M405.300 116.500h6.700M398 119.400h14"/><path d="M421.200 108h14M428.500 110.900h6.700M428.500 113.700h6.700M428.500 116.500h6.700M421.200 119.400h14"/></g>
<g stroke="#3b78b8" stroke-width="1.800"><path d="M399 113.700h5M402 110.400l-3.300 3.300 3.300 3.300"/><path d="M421.200 113.700h5M423.200 110.400l3.300 3.300-3.300 3.300"/></g>
<!-- wrap text icon -->
<g font-size="9" fill="#444" stroke="#444" stroke-width=".300" font-family="Liberation Sans, sans-serif"><text x="452.300" y="83.800">ab</text><text x="452.300" y="90">c</text></g>
<g stroke="#3b78b8" stroke-width="1.200"><path d="M463.500 85v2.200h-4.500M460.500 85.400l-1.800 1.800 1.800 1.800"/></g>
<!-- merge icon -->
<g stroke="#7f7f7f" stroke-width="1.200"><rect x="450.800" y="106.700" width="13.800" height="13.600" fill="#fff"/><path d="M450.800 109.300h13.800M450.800 117.700h13.800M457.700 106.700v2.600M457.700 117.700v2.600"/></g>
<g stroke="#3b78b8" stroke-width="1.200"><path d="M452.500 113.500h10.400M454.300 111.600l-1.900 1.900 1.900 1.900M461.100 111.600l1.900 1.900-1.900 1.900"/></g>
<!-- currency -->
<rect x="598.300" y="106.700" width="14" height="8" fill="#2e75b6"/><circle cx="605.300" cy="110.700" r="2.300" fill="#fff"/><circle cx="605.300" cy="110.700" r="1" fill="#2e75b6"/>
<g fill="#e8c27a" stroke="#c9a050" stroke-width=".5"><ellipse cx="609" cy="114" rx="3.500" ry="1.300"/><ellipse cx="609" cy="116.200" rx="3.500" ry="1.300"/><ellipse cx="609" cy="118.400" rx="3.500" ry="1.300"/><ellipse cx="605.500" cy="118.500" rx="3.300" ry="1.300"/><ellipse cx="605.500" cy="120.500" rx="3.300" ry="1.300"/></g>
<!-- decimals -->
<g font-size="7.500" fill="#555" stroke="none" font-family="Liberation Sans, sans-serif"><text x="695" y="113.500">.0</text><text x="689.500" y="120.500">.00</text><text x="713" y="113.500">.00</text><text x="718.500" y="120.500">.0</text></g>
<g stroke="#2e75b6" stroke-width="1.200"><path d="M689.500 110.700h5M691.500 108.700l-2 2 2 2"/><path d="M713 117.700h5M716 115.700l2 2-2 2"/></g>
<!-- conditional formatting -->
<g stroke="#b4b4b4" stroke-width="1" fill="#fff"><rect x="764.500" y="73" width="24.500" height="21"/><path d="M764.500 78.300h24.500M764.500 83.500h24.500M764.500 88.800h24.500M771.700 73v21M780.800 73v21"/></g>
<rect x="771.700" y="73" width="5" height="5" fill="#d9583c"/><rect x="771.700" y="78.500" width="8.300" height="5" fill="#3b78b8"/><rect x="771.700" y="83.800" width="5" height="5" fill="#d9583c"/><rect x="771.700" y="89" width="4" height="5" fill="#3b78b8"/>
<rect x="778" y="88" width="14" height="10.500" fill="#fff" stroke="#666" stroke-width="1"/><path d="M781.500 92h7M781.500 94.800h7M787 90l-3.500 6.800" stroke="#444" stroke-width="1"/>
<!-- format as table -->
<rect x="826" y="73" width="24.300" height="21" fill="#fff" stroke="#b4b4b4" stroke-width="1"/>
<rect x="832.500" y="78.300" width="17.800" height="15.700" fill="#c5d6ec"/>
<g stroke="#b4b4b4" stroke-width="1"><path d="M826 78.300h24.300M826 83.500h24.300M826 88.800h24.300M832.500 73v21M838.500 73v21M844.500 73v21"/></g>
<path d="M853.300 78.500l1.700 1.700-7.500 9.500-2.500-2z" fill="#6a6a6a"/><path d="M833 98.500c2-4.500 6-7.500 11.500-8.500l3 3c-1 4-6 6-14.500 5.500z" fill="#3b78b8"/><ellipse cx="842.500" cy="95" rx="2" ry="1.200" fill="#fff"/>
<!-- cell styles -->
<rect x="874" y="71" width="25.700" height="21.300" fill="#fff" stroke="#b4b4b4" stroke-width="1"/>
<rect x="879.500" y="76" width="14" height="9" fill="#c5d6ec"/>
<g stroke="#b4b4b4" stroke-width="1"><path d="M874 76h25.700M874 85h25.700M879.500 71v21.300M893.500 71v21.300"/></g>
<path d="M902.500 79.300l1.700 1.700-7.500 9.500-2.500-2z" fill="#6a6a6a"/><path d="M882.500 98.500c2-4.500 6-7.500 11.500-8.500l3 3c-1 4-6 6-14.500 5.500z" fill="#3b78b8"/><ellipse cx="892" cy="95" rx="2" ry="1.200" fill="#fff"/>
<!-- insert -->
<g stroke="#999" stroke-width="1" fill="#fff"><rect x="931.500" y="71.500" width="13" height="4"/><path d="M938 71.500v4"/><rect x="931.500" y="88.500" width="13" height="9"/><path d="M938 88.500v9M931.500 93h13"/></g>
<rect x="941.500" y="80" width="15" height="4.500" fill="#bdd0e9" stroke="#8aa6cc" stroke-width="1"/><path d="M949 80v4.500" stroke="#8aa6cc"/>
<g stroke="#2e75b6" stroke-width="1.600"><path d="M929 82.200h10M932.500 78.700l-3.500 3.500 3.500 3.500"/></g>
<!-- QAT -->
<path d="M6.200 160.300h10.300l1.800 1.800v10.200h-12.100z" fill="#7c4a9e"/><rect x="8.400" y="161.800" width="7.800" height="5.300" fill="#fff"/><rect x="9.300" y="169" width="6" height="3.300" fill="#fff"/><rect x="10.800" y="169.800" width="2" height="2.500" fill="#7c4a9e"/>
<g stroke="#adadad" stroke-width="2.100"><path d="M34 166h7.300a3.100 3.100 0 0 1 .7 6.100"/><path d="M37.800 162l-4 4 4 4"/><path d="M81.500 166h-7.300a3.100 3.100 0 0 0-.7 6.100"/><path d="M77.700 162l4 4-4 4"/></g>
<g stroke="#b4b4b4" stroke-width="1.100"><path d="M53 164.700l2.700 2.700 2.700-2.700M90 164.700l2.700 2.700 2.700-2.700"/></g>
<path d="M110.700 164.300h4.300" stroke="#333" stroke-width="1"/><path d="M110.500 166h4.700l-2.350 2.700z" fill="#333"/>
<!-- formula bar glyphs -->
<g fill="#a6a6a6"><rect x="113" y="197" width="2" height="2"/><rect x="113" y="201" width="2" height="2"/><rect x="113" y="205" width="2" height="2"/></g>
<g stroke="#b0b0b0" stroke-width="1.300"><path d="M141.500 197.500l9 9M150.500 197.500l-9 9"/><path d="M176 202.500l3.500 3.500 7-8"/></g>
</svg>
</div>
</body></html>
